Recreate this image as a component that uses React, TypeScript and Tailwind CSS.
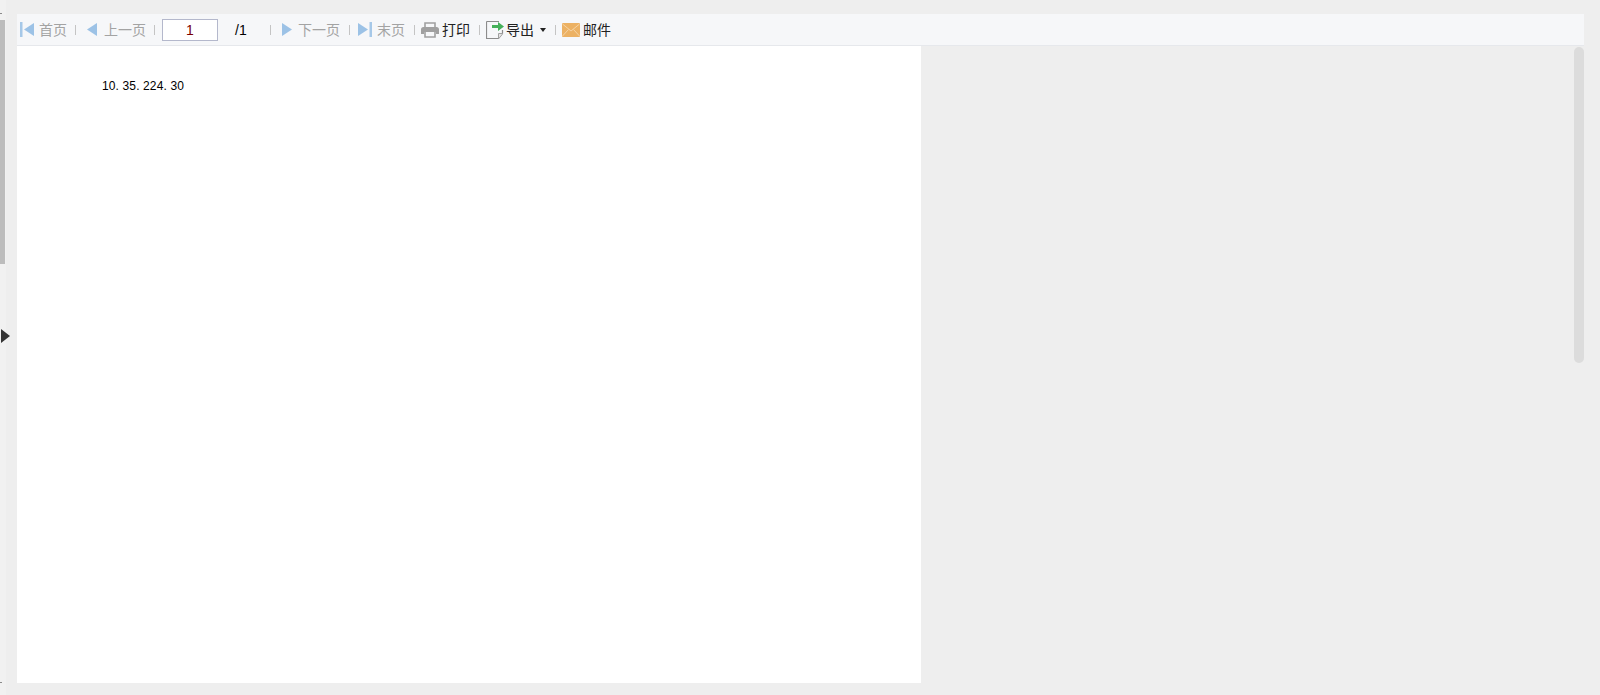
import type { ReactNode } from "react";

const FONT = "font-['Noto_Sans_CJK_SC','Liberation_Sans',sans-serif]";

function Sep({ className }: { className: string }) {
  return <span className={`h-[10px] w-px shrink-0 bg-[#c4c4c4] ${className}`} />;
}

function Label({ className, children }: { className: string; children: ReactNode }) {
  return <span className={`whitespace-nowrap pb-[2px] ${className}`}>{children}</span>;
}

function FirstIcon() {
  return (
    <svg width="14" height="15" viewBox="0 0 14 15" className="shrink-0">
      <rect x="0" y="0" width="2.500" height="15" fill="#a6c8e8" />
      <path d="M14 1V14L4 7.500Z" fill="#9cc2e6" />
    </svg>
  );
}

function PrevIcon() {
  return (
    <svg width="10" height="15" viewBox="0 0 10 15" className="shrink-0">
      <path d="M10 1V14L0 7.500Z" fill="#9cc2e6" />
    </svg>
  );
}

function NextIcon() {
  return (
    <svg width="10" height="15" viewBox="0 0 10 15" className="shrink-0">
      <path d="M0 1V14L10 7.500Z" fill="#9cc2e6" />
    </svg>
  );
}

function LastIcon() {
  return (
    <svg width="14" height="15" viewBox="0 0 14 15" className="shrink-0">
      <path d="M0 1V14L10 7.500Z" fill="#9cc2e6" />
      <rect x="11.500" y="0" width="2.500" height="15" fill="#a6c8e8" />
    </svg>
  );
}

function PrintIcon() {
  return (
    <svg width="18" height="16" viewBox="0 0 18 16" className="shrink-0">
      <path d="M4 6V1h10v5" fill="none" stroke="#a0a0a0" strokeWidth="1.6" />
      <path d="M2.500 5h13A2.500 2.500 0 0 1 18 7.500V12h-3v-2H3v2H0V7.500A2.500 2.500 0 0 1 2.500 5Z" fill="#a0a0a0" />
      <path d="M4 10v5h10v-5" fill="none" stroke="#a0a0a0" strokeWidth="1.6" />
    </svg>
  );
}

function ExportIcon() {
  return (
    <svg width="18" height="18" viewBox="0 0 18 18" className="shrink-0">
      <path d="M0.500 0.500H13M16.500 9V12.500L12.500 17.500H0.500V0.500" fill="none" stroke="#8c8c8c" strokeWidth="1.2" />
      <path d="M16.500 12.500H12.500V17.500" fill="#e4e4e4" stroke="#a0a0a0" />
      <path d="M6 4H12V1L18 5.500L12 10V7H6Z" fill="#45b05a" />
    </svg>
  );
}

function MailIcon() {
  return (
    <svg width="18" height="14" viewBox="0 0 18 14" className="shrink-0">
      <rect width="18" height="14" rx="1" fill="#ecb163" />
      <path d="M0.500 1L9 8L17.500 1M0.500 13L6.500 6.500M17.500 13L11.500 6.500" fill="none" stroke="#f5d3a4" />
    </svg>
  );
}

export default function App() {
  return (
    <div className={`flex h-[695px] w-[1600px] overflow-hidden bg-[#eeeeee] ${FONT}`}>
      {/* Left rail */}
      <div className="relative h-full w-[17px] shrink-0">
        <div className="absolute left-0 top-0 h-full w-[6px] bg-[#f1f1f1]" />
        <div className="absolute left-0 top-[20px] h-[244px] w-[5px] bg-[#bcbcbc]" />
        <div className="absolute left-0 top-[13px] h-px w-[2px] bg-[#8a8a8a]" />
        <div className="absolute left-0 top-[682px] h-px w-[2px] bg-[#8a8a8a]" />
        <div className="absolute left-[1px] top-[329px] h-0 w-0 border-y-[7px] border-l-[9px] border-y-transparent border-l-[#333333]" />
      </div>

      <div className="flex h-full w-[1567px] flex-col pt-[14px]">
        {/* Toolbar */}
        <div className="flex h-[32px] shrink-0 items-center border-b border-[#e6e8ec] bg-[#f6f7f9] pl-[3px] text-[14px] leading-[20px] text-[#a3a3a3]">
          <FirstIcon />
          <Label className="ml-[5px] w-[27px]">首页</Label>
          <Sep className="ml-[9px]" />
          <span className="ml-[11px]"><PrevIcon /></span>
          <Label className="ml-[7px] w-[41px]">上一页</Label>
          <Sep className="ml-[9px]" />
          <div className="ml-[7px] flex h-[22px] w-[56px] items-center justify-center border border-[#b4b8cc] bg-white font-['Liberation_Sans',sans-serif] text-[14px] text-[#7a0000]">1</div>
          <span className="ml-[17px] w-[35px] font-['Liberation_Sans',sans-serif] text-[14px] text-black">/1</span>
          <Sep className="" />
          <span className="ml-[11px]"><NextIcon /></span>
          <Label className="ml-[6px] w-[42px]">下一页</Label>
          <Sep className="ml-[9px]" />
          <span className="ml-[8px]"><LastIcon /></span>
          <Label className="ml-[5px] w-[27px]">末页</Label>
          <Sep className="ml-[10px]" />
          <span className="ml-[6px]"><PrintIcon /></span>
          <Label className="ml-[3px] w-[27px] text-[#222222]">打印</Label>
          <Sep className="ml-[10px]" />
          <span className="ml-[6px]"><ExportIcon /></span>
          <Label className="ml-[2px] w-[28px] text-[#222222]">导出</Label>
          <span className="ml-[6px] h-0 w-0 border-x-[3.5px] border-t-[4px] border-x-transparent border-t-[#222222]" />
          <Sep className="ml-[9px]" />
          <span className="ml-[6px]"><MailIcon /></span>
          <Label className="ml-[3px] w-[28px] text-[#222222]">邮件</Label>
        </div>

        {/* Report area */}
        <div className="relative flex min-h-0 flex-1 items-start pb-[12px]">
          <div className="h-full w-[904px] bg-white pl-[85px] pt-[31px] font-['Liberation_Sans',sans-serif] text-[12px] tracking-[0.13px] text-black">
            10. 35. 224. 30
          </div>
          <div className="absolute right-0 top-px h-[316px] w-[10px] rounded-[5px] bg-[#dcdcdc]" />
        </div>
      </div>
    </div>
  );
}
